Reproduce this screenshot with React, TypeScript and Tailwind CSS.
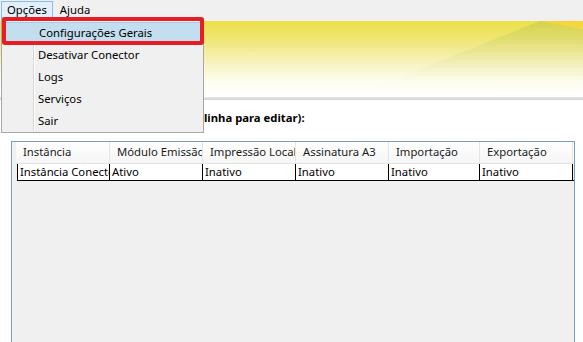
import React from "react";

const cols = [
  { h: "Instância", v: "Instância Conector", w: 93 },
  { h: "Módulo Emissão", v: "Ativo", w: 93 },
  { h: "Impressão Local", v: "Inativo", w: 93 },
  { h: "Assinatura A3", v: "Inativo", w: 93 },
  { h: "Importação", v: "Inativo", w: 91 },
  { h: "Exportação", v: "Inativo", w: 93 },
];

const items = ["Configurações Gerais", "Desativar Conector", "Logs", "Serviços", "Sair"];

export default function App() {
  return (
    <div
      className="relative w-[583px] h-[342px] overflow-hidden bg-white text-[11.3px] text-black"
      style={{ fontFamily: '"Noto Sans", "Open Sans", sans-serif' }}
    >
      {/* Menu bar */}
      <div className="h-[21px] bg-[#f0f0f0] flex items-start pl-[1px] pt-[1px]">
        <div className="h-[17px] px-[5px] border border-[#88bdf0] bg-[#e3effa] flex items-center leading-none">
          Opções
        </div>
        <div className="h-[17px] px-[7px] flex items-center leading-none">Ajuda</div>
      </div>

      {/* Banner */}
      <div className="relative h-[76px] bg-[linear-gradient(to_bottom,#ece146_0%,#f0e677_25%,#f8f3c0_55%,#fefdf0_80%,#ffffff_100%)]">
        <svg className="absolute inset-0" width="583" height="76" viewBox="0 0 583 76">
          <defs>
            <linearGradient id="mt" x1="0" y1="0" x2="0" y2="1">
              <stop offset="0" stopColor="#b6c04c" stopOpacity="0.45" />
              <stop offset="0.55" stopColor="#d6da8c" stopOpacity="0.18" />
              <stop offset="1" stopColor="#ffffff" stopOpacity="0" />
            </linearGradient>
            <linearGradient id="or" x1="0" y1="0" x2="0" y2="1">
              <stop offset="0" stopColor="#fbd230" stopOpacity="0.9" />
              <stop offset="1" stopColor="#f6d640" stopOpacity="0.6" />
            </linearGradient>
          </defs>
          <polygon points="540,0 583,0 583,8" fill="url(#or)" />
          <polygon points="540,0 583,8 583,76 350,76" fill="url(#mt)" />
        </svg>
      </div>
      <div className="h-[3px] bg-[linear-gradient(to_bottom,#e6e6e6,#d4d4d4)]" />

      {/* Label */}
      <div className="h-[41px] pl-[204px] pt-[10px] font-bold leading-[16px]">linha para editar):</div>

      {/* Table */}
      <div className="ml-[11px] w-[564px] h-[210px] border border-[#7a9cc6] bg-[#f0f0f0] pl-[4px]">
        <div className="flex h-[22px] bg-[linear-gradient(to_bottom,#ffffff,#f5f5f5)] border-b border-[#e2e2e2]">
          {cols.map((c, i) => (
            <div
              key={i}
              className="h-full overflow-hidden whitespace-nowrap pl-[7px] flex items-center border-r border-[#e5e5e5] text-[#1a1a1a]"
              style={{ width: c.w + (i === 0 ? 1 : 0) }}
            >
              {c.h}
            </div>
          ))}
        </div>
        <div className="flex h-[17px] ml-[1px] border-b border-black">
          {cols.map((c, i) => (
            <div
              key={i}
              className={`h-full overflow-hidden whitespace-nowrap pl-[2px] flex items-center bg-white border-r border-black ${i === 0 ? "border-l" : ""}`}
              style={{ width: c.w }}
            >
              {c.v}
            </div>
          ))}
        </div>
      </div>

      {/* Dropdown menu (overlay) */}
      <div className="absolute left-[1px] top-[18px] w-[203px] h-[115px] border border-[#a7a7a7] bg-[#f0f0f0] pt-[3px] flex flex-col">
        <div className="absolute left-[31px] top-[2px] bottom-[2px] w-[1px] bg-[#d7d7d7]" />
        <div className="absolute left-[32px] top-[2px] bottom-[2px] w-[1px] bg-white" />
        {items.map((t, i) => (
          <div
            key={t}
            className={`relative h-[22px] mx-[2px] flex items-center pl-[34px] leading-none ${i === 0 ? "bg-[#c3deee] border border-[#a7cde6]" : ""}`}
          >
            {t}
          </div>
        ))}
      </div>

      {/* Red highlight (overlay) */}
      <div className="absolute left-[2px] top-[17px] w-[202px] h-[28px] border-4 border-[#e71d25] rounded-[3px]" />
    </div>
  );
}
